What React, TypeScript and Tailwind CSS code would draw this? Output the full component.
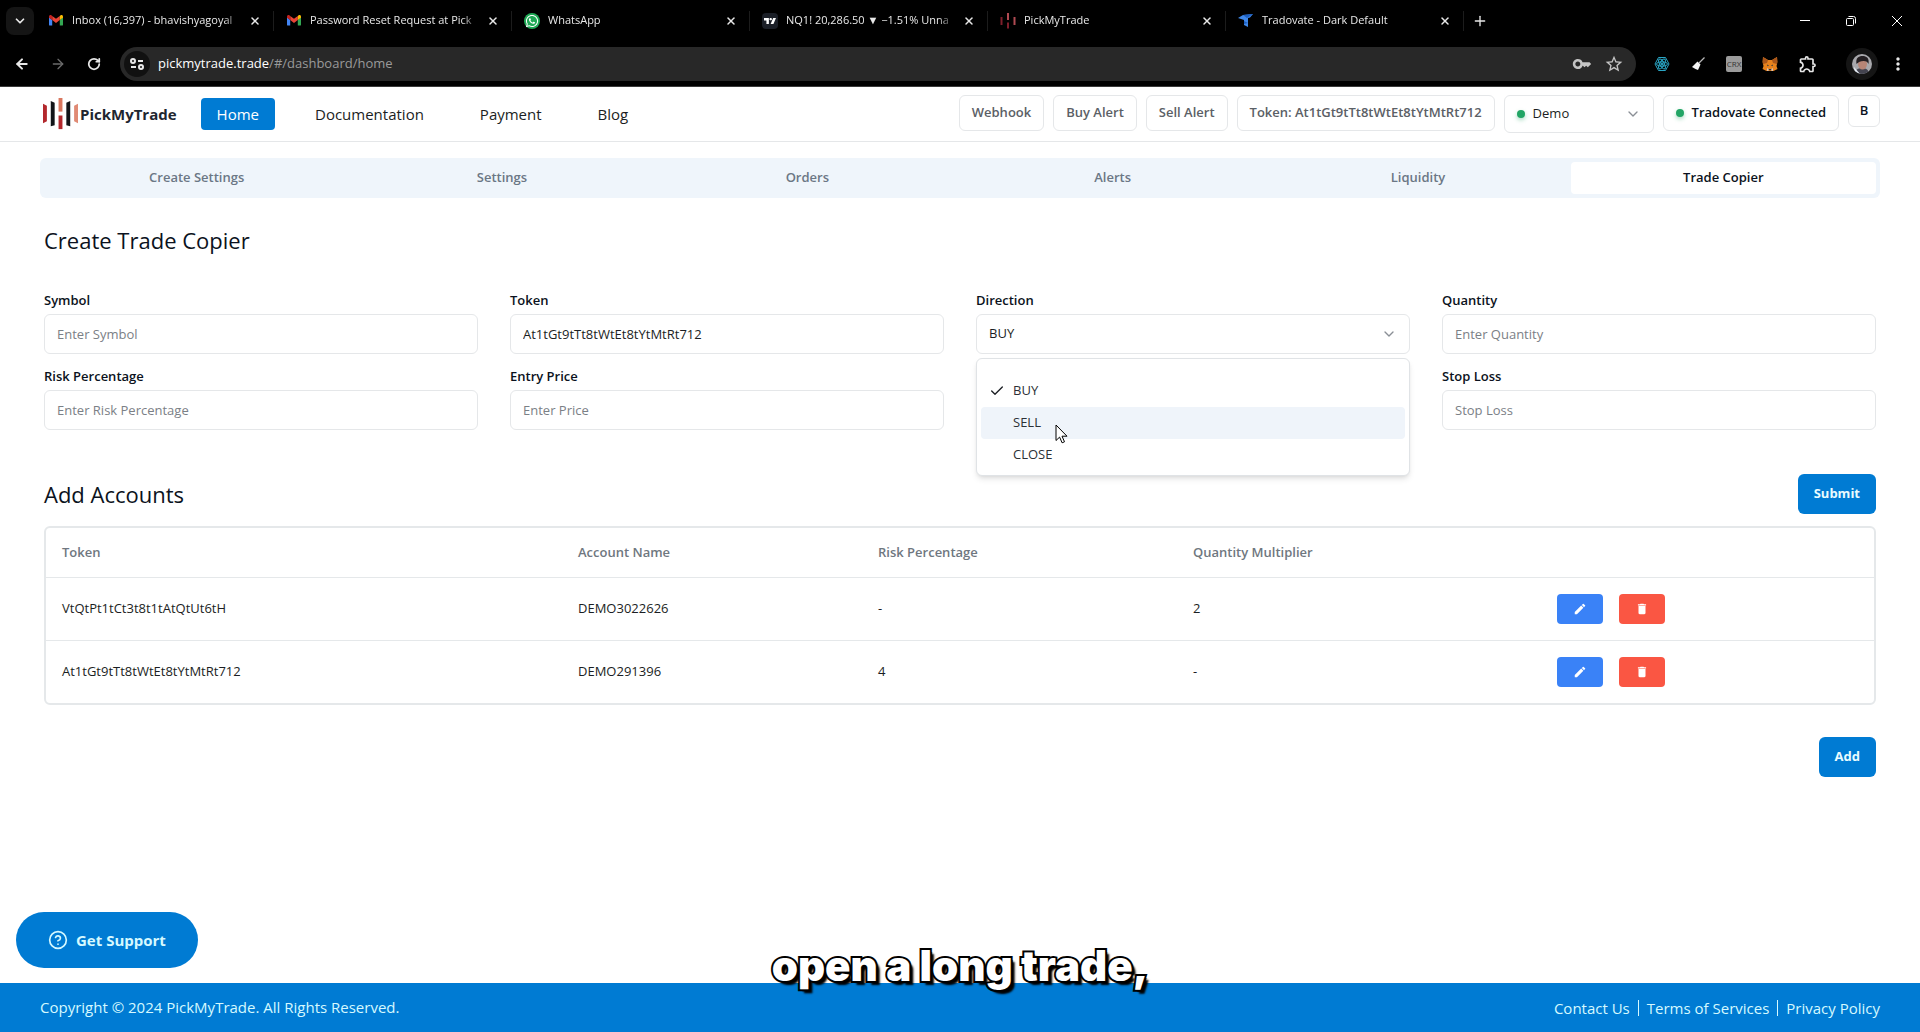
import type { ReactNode } from "react";
import {
  ArrowLeft,
  ArrowRight,
  Check,
  ChevronDown,
  CircleQuestionMark,
  Plus,
  RotateCw,
  X,
} from "lucide-react";
import { FaWhatsapp } from "react-icons/fa";
import {
  MdDelete,
  MdEdit,
  MdMoreVert,
  MdOutlineExtension,
  MdOutlineKey,
  MdStarBorder,
} from "react-icons/md";
import { SiTradingview } from "react-icons/si";

interface BrowserTab {
  title: string;
  icon: ReactNode;
}

interface Account {
  token: string;
  name: string;
  risk: string;
  multiplier: string;
}

const ACCOUNTS: Account[] = [
  { token: "VtQtPt1tCt3t8t1tAtQtUt6tH", name: "DEMO3022626", risk: "-", multiplier: "2" },
  { token: "At1tGt9tTt8tWtEt8tYtMtRt712", name: "DEMO291396", risk: "4", multiplier: "-" },
];

const SECTIONS = ["Create Settings", "Settings", "Orders", "Alerts", "Liquidity", "Trade Copier"];

function GmailIcon() {
  return (
    <svg viewBox="0 0 24 18" className="w-[14px]">
      <path d="M0 3v13.5A1.5 1.5 0 0 0 1.500 18H5.500V8.500L0 4z" fill="#4285f4" />
      <path d="M18.500 18h4a1.500 1.500 0 0 0 1.500-1.500V4l-5.500 4.500z" fill="#34a853" />
      <path d="M5.500 8.500V1.500L12 6.500l6.500-5v7L12 13.500z" fill="#ea4335" />
      <path d="M0 2.700V4.500l5.500 4V1.600L4 .5C2.200-.7 0 .6 0 2.700z" fill="#c5221f" />
      <path d="M18.500 1.600v6.900l5.500-4V2.700c0-2.100-2.200-3.400-4-2.200z" fill="#fbbc04" />
    </svg>
  );
}

function BarsLogo() {
  return (
    <svg viewBox="0 0 36 32" className="w-[35px]">
      <path d="M0 6l4 2v16l-4 2z" fill="#b3282d" />
      <path d="M8 3l4 2v23l-4 1z" fill="#111418" />
      <rect x="16" y="0" width="4" height="14" fill="#d9775f" />
      <rect x="16" y="18" width="4" height="14" fill="#b3282d" />
      <path d="M28 3l-4 2v23l4 1z" fill="#111418" />
      <path d="M36 6l-4 2v16l4 2z" fill="#e08a74" />
    </svg>
  );
}

function BarsFavicon() {
  return (
    <svg viewBox="0 0 16 16" className="size-4">
      <path d="M1.500 4v8M8 9.500v6" stroke="#7d1f2b" strokeWidth="2" />
      <path d="M8 0v7M14.500 4v8" stroke="#b04a52" strokeWidth="2" />
    </svg>
  );
}

function TradovateIcon() {
  return (
    <svg viewBox="0 0 16 16" className="size-4">
      <path d="M0 5l5-3 10-1-3 3.500-2 .5v9l-4-2V7z" fill="#3f87e8" />
      <path d="M5 2l10-1-6 4zM6 8l4 2-4 1z" fill="#1c5dbd" />
    </svg>
  );
}

const TABS: BrowserTab[] = [
  { title: "Inbox (16,397) - bhavishyagoyal", icon: <GmailIcon /> },
  { title: "Password Reset Request at Pick", icon: <GmailIcon /> },
  {
    title: "WhatsApp",
    icon: (
      <span className="flex size-4 items-center justify-center rounded-full bg-[#1fa855] text-white">
        <FaWhatsapp size={14} />
      </span>
    ),
  },
  {
    title: "NQ1! 20,286.50 ▼ −1.51% Unna",
    icon: (
      <span className="flex size-4 items-center justify-center rounded-sm bg-[#1b1f27] text-white">
        <SiTradingview size={12} />
      </span>
    ),
  },
  { title: "PickMyTrade", icon: <BarsFavicon /> },
  { title: "Tradovate - Dark Default", icon: <TradovateIcon /> },
];

function TabStrip() {
  return (
    <div className="flex h-[41px] items-center pl-[6px]">
      <button aria-label="Search tabs" className="flex size-7 items-center justify-center rounded-lg bg-[#151515]">
        <ChevronDown size={14} strokeWidth={3} />
      </button>
      <div className="ml-[2px] flex min-w-0">
        {TABS.map((tab, i) => (
          <div key={i} className="flex h-5 w-[238px] items-center border-r border-[#1c1c1c] px-3">
            <span className="flex w-4 shrink-0 justify-center">{tab.icon}</span>
            <span className="ml-2 flex-1 mask-r-from-90% text-[11px] whitespace-nowrap">
              {tab.title}
            </span>
            <button aria-label={"Close " + tab.title} className="ml-2">
              <X size={12} strokeWidth={3} />
            </button>
          </div>
        ))}
      </div>
      <button aria-label="New tab" className="ml-2">
        <Plus size={16} strokeWidth={2} />
      </button>
      <div className="ml-auto flex items-center">
        <button aria-label="Minimize" className="flex w-[46px] justify-center">
          <span className="h-px w-[10px] bg-white" />
        </button>
        <button aria-label="Restore" className="flex w-[46px] justify-center">
          <svg viewBox="0 0 10 10" className="size-[10px]" fill="none" stroke="white">
            <rect x="0.5" y="2.5" width="7" height="7" rx="1" />
            <path d="M2.500 .5h5a2 2 0 0 1 2 2v5" />
          </svg>
        </button>
        <button aria-label="Close window" className="flex w-[46px] justify-center">
          <svg viewBox="0 0 10 10" className="size-[10px]" stroke="white">
            <path d="M0 0l10 10M10 0L0 10" />
          </svg>
        </button>
      </div>
    </div>
  );
}

function ReactToolIcon() {
  return (
    <svg viewBox="0 0 16 16" className="size-4" fill="none" stroke="#2aa5c4">
      <path d="M4.500 1.500h7L15 8l-3.500 6.500h-7L1 8z" />
      <ellipse cx="8" cy="8" rx="5.500" ry="2.200" />
      <ellipse cx="8" cy="8" rx="5.500" ry="2.200" transform="rotate(60 8 8)" />
      <ellipse cx="8" cy="8" rx="5.500" ry="2.200" transform="rotate(120 8 8)" />
      <circle cx="8" cy="8" r="1" fill="#2aa5c4" />
    </svg>
  );
}

function BroomIcon() {
  return (
    <svg viewBox="0 0 16 16" className="size-4">
      <path d="M14.500 1.500 9 7" stroke="#b8b8b8" strokeWidth="1.200" />
      <path d="M7.500 5.500l3 3L8 14 5.500 13 2 11z" fill="#f4f4f4" />
    </svg>
  );
}

function FoxIcon() {
  return (
    <svg viewBox="0 0 16 16" className="size-4">
      <path d="M1 1l5 3h4l5-3 .5 5-1 4 1 3-4 2H4.500l-4-2 1-3-1-4z" fill="#e8831d" />
      <path d="M1 1l5 3-1 3-4 1zM15 1l-5 3 1 3 4 1z" fill="#a9561a" />
      <path d="M5 8.500l2 1-1.500.8zM11 8.500l-2 1 1.500.8zM6.500 13h3l-.5 1.200H7z" fill="#233447" />
      <path d="M5 12l1.500 1v2H5zM11 12l-1.500 1v2H11z" fill="#d7c1b3" />
    </svg>
  );
}

function AvatarIcon() {
  return (
    <svg viewBox="0 0 20 20" className="size-5">
      <clipPath id="avatar">
        <circle cx="10" cy="10" r="10" />
      </clipPath>
      <g clipPath="url(#avatar)">
        <rect width="20" height="20" fill="#a8a8ac" />
        <path d="M3 20c0-4 3-6 7-6s7 2 7 6z" fill="#43434f" />
        <ellipse cx="10.500" cy="10" rx="4.500" ry="5.500" fill="#b78576" />
        <path d="M4.500 10c-1-6 2-8 6-8s7 2 6 8c-1-2-2-3-5-3s-5 1-7 3z" fill="#241f22" />
        <path d="M2 13l6 7H3z" fill="#e6edf5" />
      </g>
    </svg>
  );
}

function Toolbar() {
  return (
    <div className="flex h-[46px] items-center border-b border-[#3a3a3a] px-3">
      <div className="flex shrink-0 items-center gap-4">
        <button aria-label="Back" className="flex size-5 items-center justify-center">
          <ArrowLeft size={16} strokeWidth={3} />
        </button>
        <button aria-label="Forward" className="flex size-5 items-center justify-center text-[#6b6b6b]">
          <ArrowRight size={16} strokeWidth={2} />
        </button>
        <button aria-label="Reload" className="flex size-5 items-center justify-center">
          <RotateCw size={14} strokeWidth={3} />
        </button>
      </div>
      <div className="ml-4 flex h-[34px] flex-1 items-center rounded-full bg-[#282828] pr-3 pl-1">
        <button aria-label="Site information" className="flex size-[26px] shrink-0 items-center justify-center rounded-full bg-[#111111]">
          <svg viewBox="0 0 14 12" className="w-[14px]" fill="none" stroke="#e8e8e8" strokeWidth="2">
            <circle cx="3" cy="3" r="2" />
            <path d="M8 3h5M1 9h5" />
            <circle cx="11" cy="9" r="2" />
          </svg>
        </button>
        <input
          aria-label="Address"
          defaultValue="pickmytrade.trade/#/dashboard/home"
          className="sr-only"
        />
        <span aria-hidden="true" className="ml-2 flex-1 text-[13px] text-[#9a9a9a]">
          <span className="text-white">pickmytrade.trade</span>/#/dashboard/home
        </span>
        <div className="flex items-center gap-3 text-[#c4c4c4]">
          <MdOutlineKey size={20} />
          <MdStarBorder size={20} />
        </div>
      </div>
      <div className="ml-[18px] flex shrink-0 items-center gap-5">
        <ReactToolIcon />
        <BroomIcon />
        <span className="flex size-4 items-center justify-center rounded-xs bg-[#9b9b9b] text-[8px] text-[#333333]">
          CRX
        </span>
        <FoxIcon />
        <MdOutlineExtension size={20} />
      </div>
      <div className="ml-7 flex shrink-0 items-center gap-[10px]">
        <span className="flex size-8 items-center justify-center rounded-full bg-[#151515]">
          <AvatarIcon />
        </span>
        <MdMoreVert size={20} />
      </div>
    </div>
  );
}

function StatusDot() {
  return <span className="size-2 shrink-0 rounded-full bg-[#22a565] shadow-[0_2px_4px_#22a56566]" />;
}

function HeaderButton({ children }: { children: ReactNode }) {
  return (
    <button className="flex h-9 items-center gap-2 rounded-md border border-[#e5e7e9] px-3 text-[13px] font-semibold whitespace-nowrap text-[#5b6066]">
      {children}
    </button>
  );
}

function SiteHeader() {
  return (
    <header className="flex h-[55px] items-start border-b border-[#e5e7e9] pt-2 pr-10 pl-[43px]">
      <a href="#home" className="flex h-[38px] items-center gap-[2px] text-[15px] font-bold text-[#1f2630]">
        <BarsLogo />
        PickMyTrade
      </a>
      <nav className="ml-6 flex h-[38px] items-center text-[15px] text-[#1b1e23]">
        <a href="#home" className="flex h-8 items-center rounded-sm bg-[#007bd3] px-4 text-white">
          Home
        </a>
        <a href="#documentation" className="ml-10">Documentation</a>
        <a href="#payment" className="ml-14">Payment</a>
        <a href="#blog" className="ml-14">Blog</a>
      </nav>
      <div className="ml-auto flex items-start gap-[9px]">
        <HeaderButton>Webhook</HeaderButton>
        <HeaderButton>Buy Alert</HeaderButton>
        <HeaderButton>Sell Alert</HeaderButton>
        <HeaderButton>Token: At1tGt9tTt8tWtEt8tYtMtRt712</HeaderButton>
        <button
          role="combobox"
          aria-label="Environment"
          aria-expanded="false"
          aria-controls="environment"
          className="flex h-[38px] w-[150px] items-center gap-2 rounded-md border border-[#e5e7e9] px-3 text-[13px] text-[#1b1e23]"
        >
          <StatusDot />
          <span id="environment">Demo</span>
          <ChevronDown size={16} className="ml-auto text-[#8a8f96]" />
        </button>
        <HeaderButton>
          <StatusDot />
          <span className="text-[#0b1220]">Tradovate Connected</span>
        </HeaderButton>
        <button className="size-8 rounded-md border border-[#e5e7e9] text-[13px] font-semibold text-[#0b1220]">
          B
        </button>
      </div>
    </header>
  );
}

function SectionTabs() {
  return (
    <div role="tablist" className="mx-10 mt-4 grid h-10 grid-cols-6 rounded-md bg-[#eff5fb] p-1">
      {SECTIONS.map((section) => {
        const active = section === "Trade Copier";
        return (
          <button
            key={section}
            role="tab"
            aria-selected={active}
            className={
              active
                ? "rounded-sm bg-white text-[13px] font-semibold text-[#0b1220]"
                : "rounded-sm text-[13px] font-semibold text-[#6b7785]"
            }
          >
            {section}
          </button>
        );
      })}
    </div>
  );
}

interface FieldProps {
  id: string;
  label: string;
  placeholder?: string;
  value?: string;
}

function Field({ id, label, placeholder, value }: FieldProps) {
  return (
    <div>
      <label htmlFor={id} className="block h-6 text-[13px] leading-5 font-semibold text-[#0b1220]">
        {label}
      </label>
      <input
        id={id}
        placeholder={placeholder}
        defaultValue={value}
        className="block h-10 w-full rounded-md border border-[#e5e7e9] px-3 text-[13px] text-[#1b1e23] placeholder:text-[#7b8086]"
      />
    </div>
  );
}

function Cursor() {
  return (
    <svg viewBox="0 0 13 20" className="absolute top-[65px] left-[78px] w-[13px]">
      <path d="M1 1v15.500l3.600-3.400 2.500 5.700 2.400-1-2.500-5.600H12z" fill="white" stroke="black" />
    </svg>
  );
}

function DirectionField() {
  return (
    <div className="relative">
      <span id="direction-label" className="block h-6 text-[13px] leading-5 font-semibold text-[#0b1220]">
        Direction
      </span>
      <button
        role="combobox"
        aria-labelledby="direction-label"
        aria-expanded="true"
        aria-controls="direction-list"
        className="flex h-10 w-full items-center justify-between rounded-md border border-[#e5e7e9] px-3 text-[13px] text-[#1b1e23]"
      >
        BUY
        <ChevronDown size={16} className="text-[#8a8f96]" />
      </button>
      <div
        id="direction-list"
        role="listbox"
        aria-labelledby="direction-label"
        className="absolute top-[68px] left-0 z-10 w-full rounded-md border border-[#e0e3e6] bg-white px-1 pt-4 pb-1 text-[13px] text-[#2c3036] shadow-md"
      >
        <div role="option" aria-selected="true" className="flex h-8 items-center gap-2 pl-2">
          <Check size={16} className="text-[#1b1e23]" />
          BUY
        </div>
        <div role="option" aria-selected="false" className="flex h-8 items-center rounded-sm bg-[#eff4fa] pl-8">
          SELL
        </div>
        <div role="option" aria-selected="false" className="flex h-8 items-center pl-8">
          CLOSE
        </div>
        <Cursor />
      </div>
    </div>
  );
}

function AccountsTable() {
  return (
    <div className="rounded-md border-2 border-[#e5e8ea]">
      <table className="w-full table-fixed text-left text-[13px] text-[#1b1e23]">
        <thead>
          <tr className="h-[49px] border-b border-[#e5e8ea] text-[#6f7780]">
            <th className="w-[516px] px-4 font-semibold">Token</th>
            <th className="w-[300px] px-4 font-semibold">Account Name</th>
            <th className="w-[315px] px-4 font-semibold">Risk Percentage</th>
            <th className="w-[364px] px-4 font-semibold">Quantity Multiplier</th>
            <th className="px-4" aria-label="Actions" />
          </tr>
        </thead>
        <tbody>
          {ACCOUNTS.map((account) => (
            <tr key={account.name} className="h-[63px] border-b border-[#e5e8ea] last:border-b-0">
              <td className="px-4">{account.token}</td>
              <td className="px-4">{account.name}</td>
              <td className="px-4">{account.risk}</td>
              <td className="px-4">{account.multiplier}</td>
              <td className="px-4">
                <div className="flex gap-4">
                  <button
                    aria-label={`Edit ${account.name}`}
                    className="flex h-[30px] w-[46px] items-center justify-center rounded-sm bg-[#3a82f7] text-white"
                  >
                    <MdEdit size={14} />
                  </button>
                  <button
                    aria-label={`Delete ${account.name}`}
                    className="flex h-[30px] w-[46px] items-center justify-center rounded-sm bg-[#fa5643] text-white"
                  >
                    <MdDelete size={14} />
                  </button>
                </div>
              </td>
            </tr>
          ))}
        </tbody>
      </table>
    </div>
  );
}

function PrimaryButton({ children }: { children: ReactNode }) {
  return (
    <button className="h-10 rounded-md bg-[#007bd3] px-4 text-[13px] font-bold text-[#e9fbff]">
      {children}
    </button>
  );
}

export default function App() {
  return (
    <div className="relative flex min-h-screen flex-col bg-white font-['Open_Sans','Noto_Sans',sans-serif]">
      <div className="bg-black text-[#e8e8e8]">
        <TabStrip />
        <Toolbar />
      </div>
      <SiteHeader />
      <SectionTabs />

      <main className="px-11 pt-[26px]">
        <h1 className="text-[22px] leading-8 font-medium text-[#0b1220]">Create Trade Copier</h1>
        <form className="mt-[34px] grid grid-cols-4 gap-x-8 gap-y-3">
          <Field id="symbol" label="Symbol" placeholder="Enter Symbol" />
          <Field id="token" label="Token" value="At1tGt9tTt8tWtEt8tYtMtRt712" />
          <DirectionField />
          <Field id="quantity" label="Quantity" placeholder="Enter Quantity" />
          <Field id="risk" label="Risk Percentage" placeholder="Enter Risk Percentage" />
          <Field id="entry" label="Entry Price" placeholder="Enter Price" />
          <Field id="take-profit" label="" />
          <Field id="stop-loss" label="Stop Loss" placeholder="Stop Loss" />
        </form>

        <div className="mt-11 mb-3 flex items-center justify-between">
          <h2 className="text-[22px] leading-8 font-medium text-[#0b1220]">Add Accounts</h2>
          <PrimaryButton>Submit</PrimaryButton>
        </div>
        <AccountsTable />
        <div className="mt-8 flex justify-end">
          <PrimaryButton>Add</PrimaryButton>
        </div>
      </main>

      <button className="absolute bottom-16 left-4 flex h-14 items-center gap-2 rounded-full bg-[#007bd3] px-8 text-[15px] font-bold text-[#d5f9ff]">
        <CircleQuestionMark size={20} />
        Get Support
      </button>

      <footer className="mt-auto flex h-[49px] items-center justify-between bg-[#007bd3] px-10 text-[15px] text-[#d5f9ff]">
        <p>Copyright © 2024 PickMyTrade. All Rights Reserved.</p>
        <nav className="flex items-center leading-4">
          <a href="#contact" className="border-r border-[#d5f9ff] pr-2">Contact Us</a>
          <a href="#terms" className="border-r border-[#d5f9ff] px-2">Terms of Services</a>
          <a href="#privacy" className="pl-2">Privacy Policy</a>
        </nav>
      </footer>

      <p className="absolute inset-x-0 bottom-[42px] text-center font-['Inter',sans-serif] text-[42px] leading-[48px] font-black text-white [paint-order:stroke_fill] [-webkit-text-stroke:4px_black] [text-shadow:2px_2px_1px_black,4px_4px_2px_black]">
        open a long trade,
      </p>
    </div>
  );
}
